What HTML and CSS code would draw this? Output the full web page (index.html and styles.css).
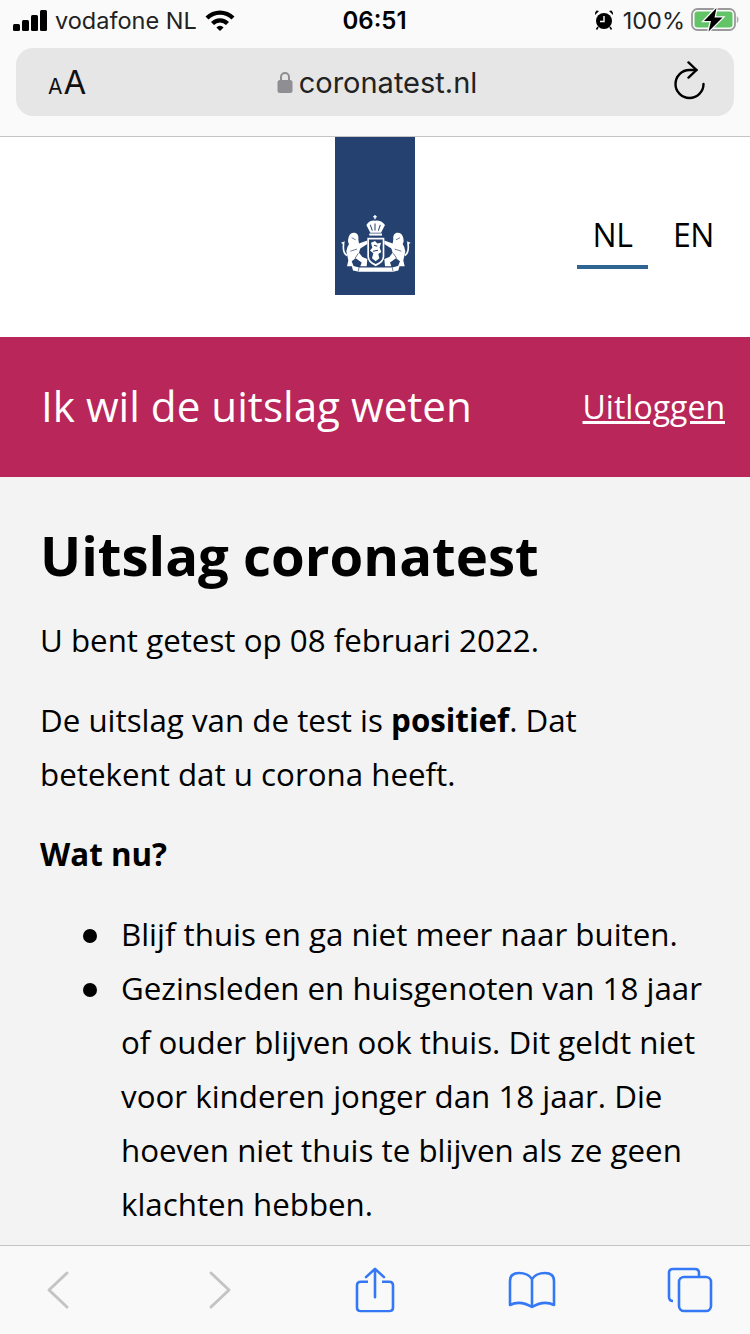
FILE: index.html
```html
<!DOCTYPE html>
<html lang="nl">
<head>
    <meta charset="UTF-8">
    <meta name="viewport" content="width=device-width, initial-scale=1.0">
    <title>Uitslag coronatest</title>
    <link rel="stylesheet" href="styles.css">
</head>
<body>

    <!-- Browser chrome: top -->
    <div class="chrome-top">
        <div class="status-bar">
            <div class="status-left">
                <div class="signal"><span class="s1"></span><span class="s2"></span><span class="s3"></span><span class="s4"></span></div>
                <span>vodafone NL</span>
                <svg class="wifi" width="30" height="22" viewBox="0 0 30 22">
                    <path d="M0.5 7.5 A20.5 20.5 0 0 1 29.5 7.5 L26.5 10.6 A16 16 0 0 0 3.5 10.6 Z" fill="#000"/>
                    <path d="M6 13 A12.5 12.5 0 0 1 24 13 L21 16.1 A8.2 8.2 0 0 0 9 16.1 Z" fill="#000"/>
                    <path d="M11.4 18.4 A5 5 0 0 1 18.6 18.4 L15 22 Z" fill="#000"/>
                </svg>
            </div>
            <div class="status-time">06:51</div>
            <div class="status-right">
                <svg class="alarm" width="20" height="22" viewBox="0 0 20 22">
                    <circle cx="10" cy="12" r="8" fill="#000"/>
                    <path d="M10 7 V12.5 H6" fill="none" stroke="#fff" stroke-width="1.4"/>
                    <path d="M1 6 L5 2 L2.5 1.5 Q0.5 3 1 6 Z M19 6 L15 2 L17.5 1.5 Q19.5 3 19 6 Z" fill="#000"/>
                    <path d="M4 18 L2.5 20.5 M16 18 L17.5 20.5" stroke="#000" stroke-width="1.5"/>
                </svg>
                <span>100%</span>
                <svg class="battery" width="48" height="26" viewBox="0 0 48 26">
                    <rect x="1" y="2" width="43" height="21" rx="5.5" fill="none" stroke="#9a9a9a" stroke-width="1.8"/>
                    <rect x="3.5" y="4.5" width="38" height="16" rx="3" fill="#62c467"/>
                    <path d="M45.8 9 Q47.6 10 47.6 12.5 Q47.6 15 45.8 16 Z" fill="#b0b0b0"/>
                    <path d="M25.5 1 L13 14 H20 L17.5 24.5 L31.5 10.5 H23.5 Z" fill="#000" stroke="#fafafa" stroke-width="2.6" paint-order="stroke"/>
                </svg>
            </div>
        </div>
        <div class="url-bar">
            <div class="aa"><span class="aa-small">A</span><span class="aa-big">A</span></div>
            <div class="url">
                <svg width="16" height="24" viewBox="0 0 16 24">
                    <path d="M4 11 V7 A4 4 0 0 1 12 7 V11" fill="none" stroke="#8e8e93" stroke-width="2"/>
                    <rect x="0.5" y="10" width="15" height="13" rx="2.5" fill="#8e8e93"/>
                </svg>
                <span>coronatest.nl</span>
            </div>
            <svg class="reload" width="31" height="39" viewBox="0 0 31 39">
                <path d="M22.5 9 H15.5 A14 14 0 1 0 29.5 23" fill="none" stroke="#000" stroke-width="2.4" stroke-linecap="round"/>
                <path d="M14.5 1.4 L22.5 9 L14.5 16.6" fill="none" stroke="#000" stroke-width="2.4" stroke-linecap="round" stroke-linejoin="round"/>
            </svg>
        </div>
    </div>

    <!-- Site header -->
    <header class="site-header">
        <div class="logo">
            <svg width="80" height="80" viewBox="0 0 240 225" preserveAspectRatio="none">
                <defs>
                    <g id="lion">
                        <path d="M42 88 Q46 76 60 78 Q72 82 70 96 L72 108 L97 100 L97 110 L76 122 L72 134 L82 146 L97 152 L95 172 L76 172 L80 162 L62 150 L50 158 L56 172 L36 172 L40 156 L34 130 Q36 118 42 110 Q36 100 42 88 Z" fill="#fff"/>
                        <path d="M36 142 Q22 134 26 108" fill="none" stroke="#fff" stroke-width="5"/>
                        <path d="M26 112 L18 106 L30 102 Z" fill="#fff"/>
                        <path d="M50 92 L62 98 M46 130 L66 124 M60 150 L70 136" fill="none" stroke="#24416f" stroke-width="2"/>
                    </g>
                </defs>
                <!-- crown -->
                <path d="M120 28 V40 M115 33 H125" stroke="#fff" stroke-width="4"/>
                <path d="M94 56 Q104 42 120 44 Q138 42 150 56 L138 78 H106 Z" fill="#fff"/>
                <path d="M106 56 L112 72 M120 52 V72 M136 56 L130 72" stroke="#24416f" stroke-width="3"/>
                <rect x="103" y="80" width="38" height="6" fill="#fff"/>
                <!-- shield -->
                <path d="M97 92 H148 V145 Q148 162 122 172 Q97 162 97 145 Z" fill="#fff"/>
                <path d="M102 97 H143 V144 Q143 158 122 166 Q102 158 102 144 Z" fill="#24416f"/>
                <path d="M108 106 L120 101 L127 108 L138 106 L134 120 L139 132 L130 138 L133 150 L122 158 L111 150 L115 136 L105 128 L112 120 Z" fill="#fff"/>
                <path d="M117 113 L127 116 M114 130 L129 127" stroke="#24416f" stroke-width="3"/>
                <!-- lions -->
                <use href="#lion"/>
                <use href="#lion" transform="translate(245 0) scale(-1 1)"/>
                <!-- ribbon -->
                <path d="M50 170 L72 176 H172 L194 170 L190 184 L174 188 H72 L54 184 Z" fill="#fff"/>
                <path d="M72 176 L70 186 M172 176 L174 186" stroke="#24416f" stroke-width="2"/>
            </svg>
        </div>
        <nav class="lang">
            <a class="lang-item active">NL</a>
            <a class="lang-item">EN</a>
        </nav>
    </header>

    <!-- Banner -->
    <div class="banner">
        <span class="banner-title">Ik wil de uitslag weten</span>
        <a class="logout">Uitloggen</a>
    </div>

    <!-- Content -->
    <main class="content">
        <h1>Uitslag coronatest</h1>
        <p>U bent getest op 08 februari 2022.</p>
        <p>De uitslag van de test is <strong>positief</strong>. Dat betekent dat u corona heeft.</p>
        <p><strong>Wat nu?</strong></p>
        <ul>
            <li>Blijf thuis en ga niet meer naar buiten.</li>
            <li>Gezinsleden en huisgenoten van 18 jaar of ouder blijven ook thuis. Dit geldt niet voor kinderen jonger dan 18 jaar. Die hoeven niet thuis te blijven als ze geen klachten hebben.</li>
        </ul>
    </main>

    <!-- Browser chrome: bottom -->
    <div class="chrome-bottom">
        <svg width="26" height="40" viewBox="0 0 26 40">
            <path d="M22 3 L4 20 L22 37" fill="none" stroke="#c4c4c4" stroke-width="3" stroke-linecap="round" stroke-linejoin="round"/>
        </svg>
        <svg class="tool-forward" width="26" height="40" viewBox="0 0 26 40">
            <path d="M4 3 L22 20 L4 37" fill="none" stroke="#c4c4c4" stroke-width="3" stroke-linecap="round" stroke-linejoin="round"/>
        </svg>
        <svg class="tool-share" width="40" height="46" viewBox="0 0 40 50" preserveAspectRatio="none">
            <path d="M13 16 H6 Q2 16 2 20 V44 Q2 48 6 48 H34 Q38 48 38 44 V20 Q38 16 34 16 H27" fill="none" stroke="#3478f6" stroke-width="2.6"/>
            <path d="M20 33 V2 M11 11 L20 2 L29 11" fill="none" stroke="#3478f6" stroke-width="2.6" stroke-linecap="round" stroke-linejoin="round"/>
        </svg>
        <svg class="tool-book" width="48" height="38" viewBox="0 0 48 38">
            <path d="M24 8 Q20 2 11 2 Q2 2 2 10 V34 Q12 29 24 36 Q36 29 46 34 V10 Q46 2 37 2 Q28 2 24 8 Z M24 8 V36" fill="none" stroke="#3478f6" stroke-width="2.6" stroke-linejoin="round"/>
        </svg>
        <svg class="tool-tabs" width="46" height="46" viewBox="0 0 46 46">
            <path d="M6 34 Q2 34 2 30 V6 Q2 2 6 2 H28 Q32 2 32 6 V9" fill="none" stroke="#3478f6" stroke-width="2.6"/>
            <rect x="12" y="10" width="32" height="34" rx="5" fill="none" stroke="#3478f6" stroke-width="2.6"/>
        </svg>
    </div>

</body>
</html>
```

FILE: styles.css
```css
html, body {
    margin: 0;
    padding: 0;
}

body {
    width: 750px;
    height: 1334px;
    overflow: hidden;
    display: flex;
    flex-direction: column;
    font-family: "Open Sans", "Noto Sans", sans-serif;
    background: #f3f3f3;
    color: #000;
}

/* Browser chrome */
.chrome-top {
    height: 136px;
    flex-shrink: 0;
    background: #fafafa;
    border-bottom: 1px solid #c4c4c4;
    font-family: Inter, "Liberation Sans", sans-serif;
}

.status-bar {
    height: 40px;
    margin-bottom: 8px;
    padding: 0 11px 0 13px;
    display: grid;
    grid-template-columns: 1fr auto 1fr;
    align-items: center;
    font-size: 23.5px;
    color: #222;
}

.status-left {
    display: flex;
    align-items: center;
    gap: 8px;
}

.signal {
    display: flex;
    align-items: flex-end;
    gap: 2px;
    height: 21px;
}

.signal span {
    width: 7px;
    background: #000;
    border-radius: 1.5px;
}

.s1 { height: 7px; }
.s2 { height: 11px; }
.s3 { height: 16px; }
.s4 { height: 21px; }

.status-time {
    margin-right: 3px;
    font-size: 24px;
    font-weight: 600;
    color: #000;
}

.status-right {
    display: flex;
    align-items: center;
    justify-content: flex-end;
    gap: 9px;
}

.status-right span {
    margin-right: -3px;
}

.url-bar {
    height: 68px;
    margin: 0 16px;
    padding: 0 29px 0 32px;
    display: flex;
    align-items: center;
    justify-content: space-between;
    background: #e6e6e6;
    border-radius: 17px;
}

.aa {
    width: 42px;
    display: flex;
    align-items: baseline;
    gap: 1px;
    color: #111;
}

.aa-small { font-size: 21px; }
.aa-big { font-size: 33px; }

.url {
    display: flex;
    align-items: center;
    gap: 6px;
    font-size: 29px;
    color: #222;
}

.reload {
    margin: 0 0 3px 10px;
}

/* Site header */
.site-header {
    height: 200px;
    flex-shrink: 0;
    position: relative;
    background: #fff;
}

.logo {
    width: 80px;
    height: 158px;
    margin: 0 auto;
    background: #24416f;
    display: flex;
    justify-content: center;
    align-items: flex-end;
}

.logo svg {
    margin-bottom: 10px;
}

.lang {
    position: absolute;
    top: 78px;
    right: 21px;
    display: flex;
    gap: 10px;
    font-size: 32px;
    letter-spacing: -0.5px;
}

.lang-item {
    width: 71px;
    height: 54px;
    line-height: 40px;
    text-align: center;
    box-sizing: border-box;
}

.lang-item.active {
    border-bottom: 4px solid #2f6592;
}

/* Banner */
.banner {
    height: 140px;
    flex-shrink: 0;
    padding: 0 25px 0 41px;
    display: flex;
    align-items: center;
    justify-content: space-between;
    background: #b9265a;
    color: #fff;
}

.banner-title {
    margin-bottom: 4px;
    font-size: 42.2px;
}

.logout {
    margin-bottom: 2px;
    font-size: 32px;
    text-decoration: underline;
}

/* Content */
.content {
    flex: 1;
    min-height: 0;
    overflow: hidden;
    padding: 0 40px;
}

h1 {
    margin: 42px 0 22px;
    font-size: 54.5px;
    line-height: 72px;
    font-weight: 700;
}

p {
    margin: 0 0 26px;
    font-size: 31.3px;
    line-height: 54px;
}

ul {
    margin: 0;
    padding-left: 81px;
    font-size: 31.3px;
    line-height: 54px;
}

li {
    display: flex;
    list-style: none;
}

li::before {
    content: "";
    flex: none;
    width: 14px;
    height: 14px;
    margin: 22px 24px 0 -38px;
    border-radius: 50%;
    background: #000;
}

/* Bottom toolbar */
.chrome-bottom {
    height: 89px;
    flex-shrink: 0;
    box-sizing: border-box;
    border-top: 1px solid #c4c4c4;
    background: #f9f9f9;
    padding-left: 45px;
    display: flex;
    align-items: center;
}

.tool-forward { margin-left: 136px; }
.tool-share { margin-left: 122px; }
.tool-book { margin-left: 113px; }
.tool-tabs { margin-left: 111px; }
```
